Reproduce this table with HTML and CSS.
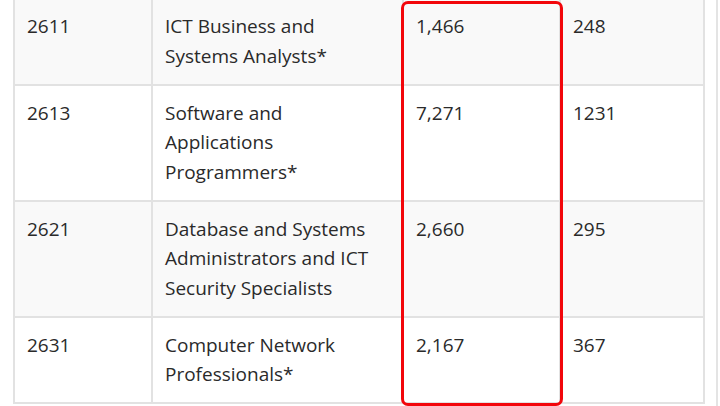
FILE: index.html
```html
<!DOCTYPE html>
<html>
<head>
<meta charset="utf-8">
<link rel="stylesheet" href="styles.css">
</head>
<body>
<div class="page">
  <div class="table-wrap">
    <table class="occ">
      <colgroup>
        <col class="c1"><col class="c2"><col class="c3"><col class="c4">
      </colgroup>
      <tbody>
        <tr class="odd"><td>2611</td><td>ICT Business and Systems Analysts*</td><td>1,466</td><td>248</td></tr>
        <tr><td>2613</td><td>Software and Applications Programmers*</td><td>7,271</td><td>1231</td></tr>
        <tr class="odd"><td>2621</td><td>Database and Systems Administrators and ICT Security Specialists</td><td>2,660</td><td>295</td></tr>
        <tr><td>2631</td><td>Computer Network Professionals*</td><td>2,167</td><td>367</td></tr>
      </tbody>
    </table>
    <div class="highlight"></div>
  </div>
</div>
</body>
</html>
```
FILE: styles.css
```css
html, body {
  margin: 0;
  padding: 0;
  background: #fff;
  overflow: hidden;
}
.page {
  width: 716px;
  height: 406px;
  border-right: 2px solid #e4e4e4;
  font-family: "Open Sans", "DejaVu Sans", sans-serif;
  color: #2a2a2a;
  overflow: hidden;
}
.table-wrap {
  position: relative;
  display: flow-root;
  padding-left: 13px;
}
.occ {
  border-collapse: collapse;
  table-layout: fixed;
  width: 690px;
  margin-top: -3px;
  font-size: 19px;
  line-height: 29.5px;
}
.c1 { width: 138px; }
.c2 { width: 251px; }
.c3 { width: 157px; }
.c4 { width: 144px; }
.occ td {
  border: 2px solid #e2e2e2;
  padding: 13px 12px 12.5px 12px;
  vertical-align: top;
}
.occ tr.odd td {
  background: #f9f9f9;
}
.highlight {
  position: absolute;
  left: 401px;
  top: 1px;
  width: 156px;
  height: 399px;
  border: 3.5px solid #f2060b;
  border-radius: 7px;
  pointer-events: none;
}
```
